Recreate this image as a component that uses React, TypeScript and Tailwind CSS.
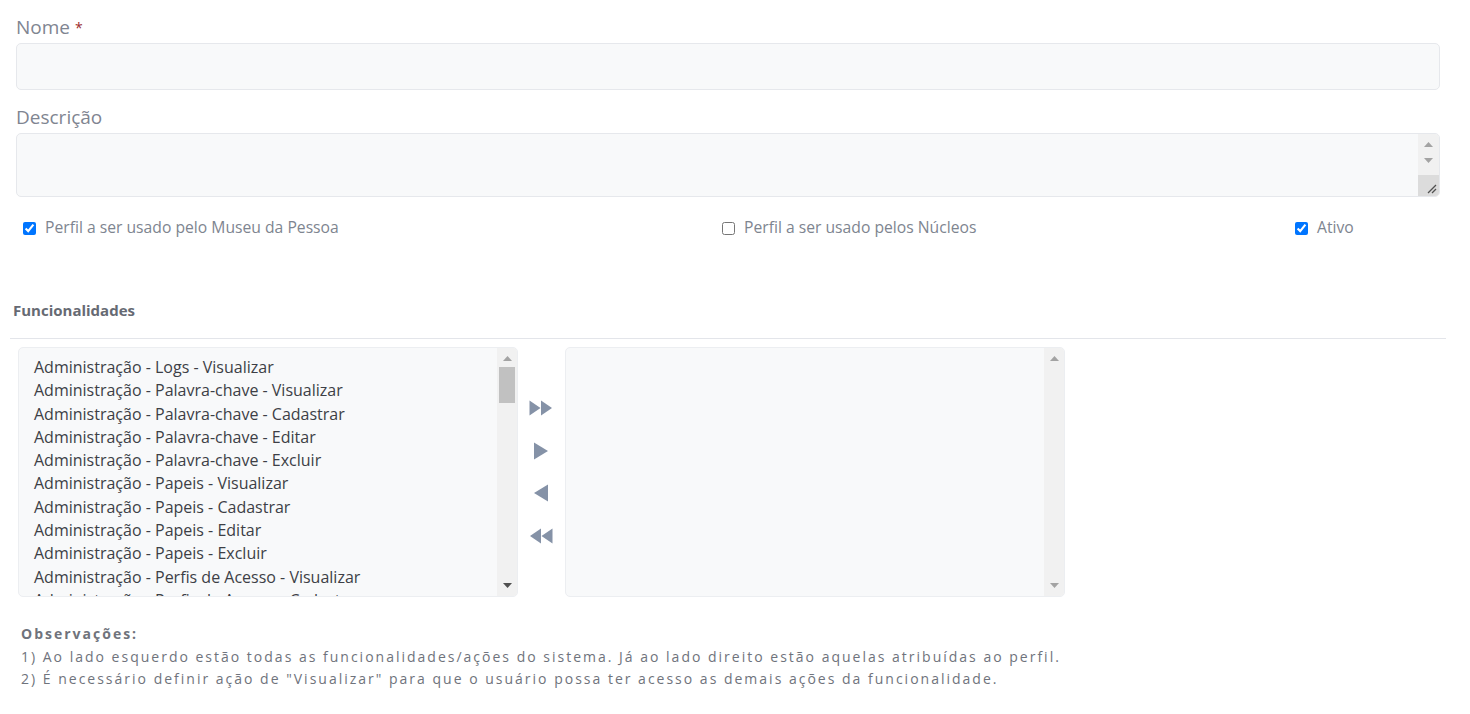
const itens = [
  'Administração - Logs - Visualizar',
  'Administração - Palavra-chave - Visualizar',
  'Administração - Palavra-chave - Cadastrar',
  'Administração - Palavra-chave - Editar',
  'Administração - Palavra-chave - Excluir',
  'Administração - Papeis - Visualizar',
  'Administração - Papeis - Cadastrar',
  'Administração - Papeis - Editar',
  'Administração - Papeis - Excluir',
  'Administração - Perfis de Acesso - Visualizar',
  'Administração - Perfis de Acesso - Cadastrar',
]

function Tri({ dir, dark }: { dir: 'up' | 'down'; dark?: boolean }) {
  return (
    <svg width="9" height="5" viewBox="0 0 9 5" className={dark ? 'fill-[#505050]' : 'fill-[#a3a3a3]'}>
      {dir === 'up' ? <polygon points="0,5 4.5,0 9,5" /> : <polygon points="0,0 9,0 4.5,5" />}
    </svg>
  )
}

// fake native scrollbar, since headless chrome may hide the real one
function Scrollbar({ thumb, downDark }: { thumb?: boolean; downDark?: boolean }) {
  return (
    <div className="w-[20px] shrink-0 bg-[#f1f1f1] flex flex-col items-center pt-[8px] pb-[8px]">
      <Tri dir="up" />
      <div className="flex-1 w-full px-[2px] pt-[6px]">
        {thumb && <div className="h-[36px] w-full bg-[#c1c1c1]" />}
      </div>
      <Tri dir="down" dark={downDark} />
    </div>
  )
}

function MoveButton({ kind }: { kind: 'allRight' | 'right' | 'left' | 'allLeft' }) {
  return (
    <button type="button" className="w-[30px] h-[24px] flex items-center justify-center">
      <svg width="24" height="18" viewBox="0 0 24 18" className="fill-[#8592a7]">
        {kind === 'allRight' && (
          <>
            <polygon points="0.5,1.5 11.5,9 0.5,16.5" />
            <polygon points="12,1.5 23,9 12,16.5" />
          </>
        )}
        {kind === 'right' && <polygon points="5,0.5 19,9 5,17.5" />}
        {kind === 'left' && <polygon points="19,0.5 5,9 19,17.5" />}
        {kind === 'allLeft' && (
          <>
            <polygon points="12,1.5 1,9 12,16.5" />
            <polygon points="23.5,1.5 12.5,9 23.5,16.5" />
          </>
        )}
      </svg>
    </button>
  )
}

export default function App() {
  return (
    <div className="w-[1436px] ml-[10px] bg-white font-['Open_Sans',sans-serif]">
      <div className="px-[6px] pt-[14px]">
        <label className="block h-[27px] text-[19px] leading-[27px] text-[#7f8591]">
          Nome <span className="text-[14px] align-top text-[#9b2c2c]">*</span>
        </label>
        <input
          type="text"
          className="mt-[2px] block w-full h-[47px] rounded-[5px] border border-[#e6e8ec] bg-[#f8f9fa] outline-none"
        />

        <label className="mt-[14px] block h-[27px] text-[19px] leading-[27px] text-[#7f8591]">Descrição</label>
        <div className="mt-[2px] flex h-[64px] w-full rounded-[5px] border border-[#e6e8ec] bg-[#f8f9fa] overflow-hidden">
          <div className="flex-1" />
          <div className="w-[21px] bg-[#f1f1f1] flex flex-col items-center">
            <div className="pt-[8px]"><Tri dir="up" /></div>
            <div className="pt-[11px]"><Tri dir="down" /></div>
            <div className="mt-auto w-full h-[21px] bg-[#dcdcdc] relative">
              <svg width="10" height="10" viewBox="0 0 10 10" className="absolute right-[2px] bottom-[2px] stroke-[#505050]" strokeWidth="1.2">
                <line x1="1" y1="9" x2="9" y2="1" />
                <line x1="5" y1="9" x2="9" y2="5" />
              </svg>
            </div>
          </div>
        </div>

        <div className="mt-[21px] flex h-[20px] items-center text-[15.7px] text-[#7e8590]">
          <label className="w-[706px] pl-[7px] flex items-center gap-[9px]">
            <input type="checkbox" defaultChecked className="w-[13px] h-[13px] m-0" />
            Perfil a ser usado pelo Museu da Pessoa
          </label>
          <label className="w-[573px] flex items-center gap-[9px]">
            <input type="checkbox" className="w-[13px] h-[13px] m-0" />
            Perfil a ser usado pelos Núcleos
          </label>
          <label className="flex items-center gap-[9px]">
            <input type="checkbox" defaultChecked className="w-[13px] h-[13px] m-0" />
            Ativo
          </label>
        </div>
      </div>

      <h6 className="mt-[62px] pl-[3px] text-[15px] leading-[20px] font-bold text-[#666a73]">Funcionalidades</h6>
      <hr className="mt-[18px] border-0 border-t border-[#e3e5ea]" />

      <div className="mt-[8px] pl-[8px] flex items-stretch">
        <div className="w-[500px] h-[250px] flex rounded-[5px] border border-[#eceef1] bg-[#f8f9fa] overflow-hidden">
          <div className="flex-1 pt-[8px] pl-[15px] overflow-hidden">
            {itens.map((t) => (
              <div key={t} className="h-[23.3px] leading-[23.3px] text-[16px] text-[#3d3f46] whitespace-nowrap">
                {t}
              </div>
            ))}
          </div>
          <Scrollbar thumb downDark />
        </div>

        <div className="w-[47px] flex flex-col items-start pl-[8px] pt-[49px] gap-[18.5px]">
          <MoveButton kind="allRight" />
          <MoveButton kind="right" />
          <MoveButton kind="left" />
          <MoveButton kind="allLeft" />
        </div>

        <div className="w-[500px] h-[250px] flex rounded-[5px] border border-[#eceef1] bg-[#f8f9fa] overflow-hidden">
          <div className="flex-1" />
          <Scrollbar />
        </div>
      </div>

      <div className="mt-[26px] pl-[11px] text-[14px] leading-[22.5px] tracking-[2px] text-[#6f737c]">
        <div className="font-bold">Observações:</div>
        <div>1) Ao lado esquerdo estão todas as funcionalidades/ações do sistema. Já ao lado direito estão aquelas atribuídas ao perfil.</div>
        <div>2) É necessário definir ação de "Visualizar" para que o usuário possa ter acesso as demais ações da funcionalidade.</div>
      </div>
    </div>
  )
}
